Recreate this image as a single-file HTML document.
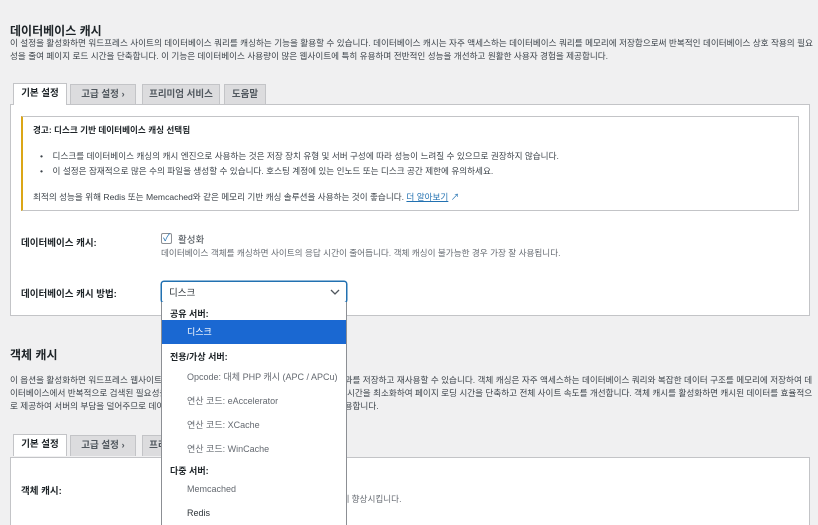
<!DOCTYPE html>
<html style="width:818px;height:525px;overflow:hidden"><head><meta charset="utf-8"><style>
*{margin:0;padding:0;box-sizing:border-box}
body{width:818px;height:525px;overflow:hidden;background:#f0f0f1;font-family:"Liberation Sans","Noto Sans CJK KR",sans-serif;color:#3c434a;font-size:9px;position:relative}
.a{position:absolute;white-space:nowrap}
h2{position:absolute;font-size:12px;line-height:20px;font-weight:bold;color:#1d2327}
.p{position:absolute;left:10px;width:805px;font-size:8.6px;line-height:13px;color:#3c434a;white-space:normal}
.tab{position:absolute;height:21px;border:1px solid #c3c4c7;border-bottom:none;background:#dcdcde;font-size:9.5px;font-weight:bold;color:#50575e;text-align:center;line-height:20px}
.tab.on{background:#fff;color:#1d2327;height:22px}
.panel{position:absolute;left:10px;width:800px;background:#fff;border:1px solid #c3c4c7}
.lbl{font-size:9.5px;font-weight:bold;color:#1d2327}
.dd div{position:absolute;left:0;right:0;font-size:9px;white-space:nowrap}
</style></head><body>
<h2 style="left:10px;top:21px">데이터베이스 캐시</h2>
<div class="p" style="top:37px">이 설정을 활성화하면 워드프레스 사이트의 데이터베이스 쿼리를 캐싱하는 기능을 활용할 수 있습니다. 데이터베이스 캐시는 자주 액세스하는 데이터베이스 쿼리를 메모리에 저장함으로써 반복적인 데이터베이스 상호 작용의 필요성을 줄여 페이지 로드 시간을 단축합니다. 이 기능은 데이터베이스 사용량이 많은 웹사이트에 특히 유용하며 전반적인 성능을 개선하고 원활한 사용자 경험을 제공합니다.</div>

<div class="tab" style="left:70px;top:84px;width:66px">고급 설정 ›</div>
<div class="tab" style="left:142px;top:84px;width:78px">프리미엄 서비스</div>
<div class="tab" style="left:224px;top:84px;width:42px">도움말</div>
<div class="panel" style="top:104px;height:212px"></div>
<div class="tab on" style="left:13px;top:83px;width:54px">기본 설정</div>

<div class="a" style="left:21px;top:116px;width:778px;height:95px;border:1px solid #c3c4c7;border-left:2px solid #dba617;background:#fff"></div>
<div class="a lbl" style="left:33px;top:124px;font-size:8.6px">경고: 디스크 기반 데이터베이스 캐싱 선택됨</div>
<div class="a" style="left:40px;top:150px;font-size:8.6px">•&nbsp;&nbsp;&nbsp;&nbsp;디스크를 데이터베이스 캐싱의 캐시 엔진으로 사용하는 것은 저장 장치 유형 및 서버 구성에 따라 성능이 느려질 수 있으므로 권장하지 않습니다.</div>
<div class="a" style="left:40px;top:165px;font-size:8.6px">•&nbsp;&nbsp;&nbsp;&nbsp;이 설정은 잠재적으로 많은 수의 파일을 생성할 수 있습니다. 호스팅 계정에 있는 인노드 또는 디스크 공간 제한에 유의하세요.</div>
<div class="a" style="left:33px;top:191px;font-size:8.6px">최적의 성능을 위해 Redis 또는 Memcached와 같은 메모리 기반 캐싱 솔루션을 사용하는 것이 좋습니다. <span style="color:#2271b1;text-decoration:underline">더 알아보기</span> <span style="color:#2271b1">↗</span></div>

<div class="a lbl" style="left:21px;top:235px">데이터베이스 캐시:</div>
<div class="a" style="left:161px;top:233px;width:11px;height:11px;border:1px solid #8c8f94;border-radius:2px;color:#2271b1;font-size:10px;line-height:9px;text-align:center">✓</div>
<div class="a" style="left:178px;top:232px;font-size:9.5px">활성화</div>
<div class="a" style="left:161px;top:247px;font-size:8.6px;color:#646970">데이터베이스 객체를 캐싱하면 사이트의 응답 시간이 줄어듭니다. 객체 캐싱이 불가능한 경우 가장 잘 사용됩니다.</div>

<div class="a lbl" style="left:21px;top:286px">데이터베이스 캐시 방법:</div>
<div class="a" style="left:161px;top:281px;width:186px;height:22px;border:1px solid #2271b1;border-radius:3px;background:#fff;box-shadow:0 0 0 0.5px #2271b1"></div>
<div class="a" style="left:169px;top:285px;font-size:9.5px;color:#2c3338">디스크</div>
<svg class="a" style="left:330px;top:288px" width="10" height="8"><path d="M1 2l4 4 4-4" fill="none" stroke="#50575e" stroke-width="1.3"/></svg>

<h2 style="left:10px;top:345px">객체 캐시</h2>
<div class="p" style="top:374px">이 옵션을 활성화하면 워드프레스 웹사이트의 객체 캐싱 기능을 활용하여 데이터베이스 쿼리 결과를 저장하고 재사용할 수 있습니다. 객체 캐싱은 자주 액세스하는 데이터베이스 쿼리와 복잡한 데이터 구조를 메모리에 저장하여 데이터베이스에서 반복적으로 검색된 필요성을 줄여줍니다. 이를 통해 서버의 부하를 줄이고 응답 시간을 최소화하여 페이지 로딩 시간을 단축하고 전체 사이트 속도를 개선합니다. 객체 캐시를 활성화하면 캐시된 데이터를 효율적으로 제공하여 서버의 부담을 덜어주므로 데이터베이스를 많이 사용하는 동적 웹사이트에 특히 유용합니다.</div>

<div class="tab" style="left:70px;top:435px;width:66px">고급 설정 ›</div>
<div class="tab" style="left:142px;top:435px;width:78px">프리미엄 서비스</div>
<div class="panel" style="top:457px;height:68px;border-bottom:none"></div>
<div class="tab on" style="left:13px;top:434px;width:54px">기본 설정</div>
<div class="a lbl" style="left:21px;top:483px">객체 캐시:</div>
<div class="a" style="left:161px;top:493px;font-size:8.6px;color:#646970">객체 캐시를 활성화하면 동적인 사이트의 성능을 크게 향상시킵니다.</div>

<div class="a dd" style="left:161px;top:302px;width:186px;height:223px;background:#fff;border:1px solid #8c8f94;border-top:none;border-bottom:none">
<div style="top:5px;left:8px;font-weight:bold;color:#1d2327">공유 서버:</div>
<div style="top:18px;height:24px;background:#1a68d2;color:#fff;padding-left:25px;line-height:24px">디스크</div>
<div style="top:48px;left:8px;font-weight:bold;color:#1d2327">전용/가상 서버:</div>
<div style="top:68px;left:25px;color:#646970">Opcode: 대체 PHP 캐시 (APC / APCu)</div>
<div style="top:92px;left:25px;color:#646970">연산 코드: eAccelerator</div>
<div style="top:116px;left:25px;color:#646970">연산 코드: XCache</div>
<div style="top:140px;left:25px;color:#646970">연산 코드: WinCache</div>
<div style="top:162px;left:8px;font-weight:bold;color:#1d2327">다중 서버:</div>
<div style="top:182px;left:25px;color:#646970">Memcached</div>
<div style="top:206px;left:25px;color:#2c3338">Redis</div>
</div>
</body></html>
